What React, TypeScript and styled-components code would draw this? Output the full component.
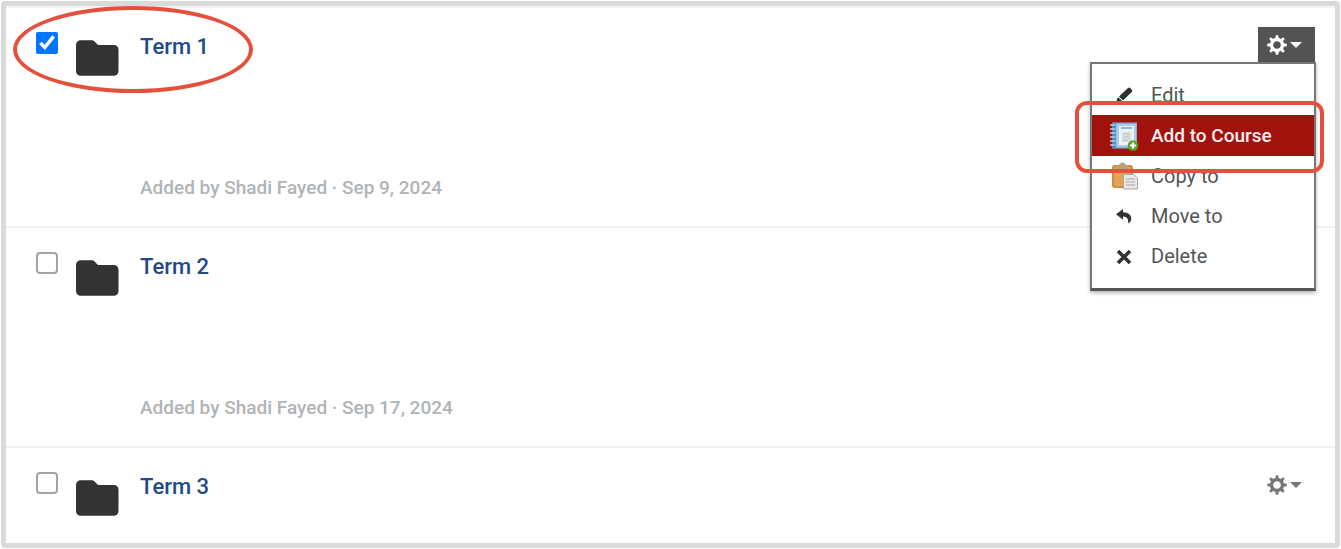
import React from "react";
import styled, { createGlobalStyle, css } from "styled-components";

const ACCENT = "#e5503d";

const GlobalStyle = createGlobalStyle`
  *, *::before, *::after { box-sizing: border-box; }
  body {
    margin: 0;
    background: #fff;
    font-family: Roboto, "Liberation Sans", sans-serif;
    font-size: 20px;
    color: #555;
  }
`;

const Page = styled.div`
  min-height: 100vh;
  padding: 1px;
  display: flex;
`;

const Frame = styled.main`
  flex: 1;
  border: 5px solid #d9dad9;
  border-radius: 4px;
  background: #fff;
`;

const List = styled.ul`
  list-style: none;
  margin: 0;
  padding: 0;
  border-top: 2px solid #f4f4f4;
`;

const Row = styled.li`
  position: relative;
  display: flex;
  align-items: flex-start;
  padding: 24px 20px 24px 30px;

  & + & {
    border-top: 2px solid #f1f1f1;
  }
`;

const Checkbox = styled.input`
  width: 22px;
  height: 22px;
  margin: 0 16px 0 0;

  &:not(:checked) {
    appearance: none;
    border: 2px solid #a3a3a3;
    border-radius: 4px;
    background: #fff;
  }
`;

const FolderIcon = styled.svg`
  width: 46px;
  height: 38px;
  margin: 7px 20px 0 0;
  fill: #333;
`;

const Details = styled.div`
  flex: 1;
  padding-top: 2px;
`;

const Title = styled.h2`
  margin: 0;
  font-size: 22px;
  line-height: 26px;
  font-weight: 500;
`;

const TitleLink = styled.a`
  color: #234a85;
  text-decoration: none;
`;

const Meta = styled.p`
  margin: 115px 0 1px;
  font-size: 19px;
  font-weight: 500;
  line-height: 26px;
  color: #b0b4b7;
`;

const Actions = styled.div`
  position: relative;
  margin-top: -5px;
`;

const GearButton = styled.button<{ $open?: boolean }>`
  display: flex;
  align-items: center;
  justify-content: center;
  gap: 3px;
  width: 57px;
  height: 35px;
  padding: 0 4px 0 0;
  border: 0;
  color: #777;
  background: transparent;
  ${(p) =>
    p.$open &&
    css`
      color: #fff;
      background: #535353;
    `}
`;

const Menu = styled.ul`
  position: absolute;
  z-index: 1;
  top: 100%;
  right: -1px;
  width: 226px;
  margin: 0;
  padding: 11px 0 12px;
  list-style: none;
  background: #fff;
  border: 2px solid #777;
  border-bottom: 3px solid #555;
  box-shadow: 0 2px 4px rgba(0, 0, 0, 0.3);
`;

const MenuEntry = styled.li`
  position: relative;
`;

const MenuButton = styled.button<{ $active?: boolean }>`
  display: flex;
  align-items: center;
  width: 100%;
  height: 40px;
  padding: 0 16px;
  border: 0;
  font: inherit;
  color: #555;
  background: transparent;
  ${(p) =>
    p.$active &&
    css`
      height: 41px;
      font-size: 19px;
      font-weight: 500;
      color: #fbeeee;
      background: #a2120d;
    `}
`;

const MenuIcon = styled.span`
  display: flex;
  justify-content: center;
  width: 32px;
  margin-right: 11px;
`;

const Highlight = styled.div`
  position: absolute;
  inset: -14px -10px -17px -17px;
  z-index: 2;
  border: 4px solid ${ACCENT};
  border-radius: 12px;
  pointer-events: none;
`;

const Ellipse = styled.div`
  position: absolute;
  top: -2px;
  left: 7px;
  width: 240px;
  height: 87px;
  border: 4px solid ${ACCENT};
  border-radius: 50%;
  pointer-events: none;
`;

const Folder = () => (
  <FolderIcon viewBox="0 0 46 38" aria-hidden="true">
    <path d="M7 1.200h10.500c1.500 0 2.400.5 3.300 1.500L24 6h15.500c3 0 5 1.800 5 4.800V32c0 3-2 4.800-5 4.800H7c-3 0-5-1.800-5-4.800V6c0-3 2-4.800 5-4.800z" />
  </FolderIcon>
);

const Gear = () => (
  <>
    <svg width="20" height="20" viewBox="-10 -10 20 20" aria-hidden="true">
      <circle r="5.500" fill="none" stroke="currentColor" strokeWidth="3.400" />
      {[0, 45, 90, 135, 180, 225, 270, 315].map((angle) => (
        <path
          key={angle}
          d="M-1.800-6L-1.200-9.800H1.200L1.800-6z"
          fill="currentColor"
          transform={`rotate(${angle})`}
        />
      ))}
    </svg>
    <svg width="12" height="8" viewBox="0 0 12 8" aria-hidden="true">
      <path d="M0 1h12L6 7z" fill="currentColor" />
    </svg>
  </>
);

const PencilIcon = () => (
  <svg width="20" height="20" viewBox="0 0 20 20" fill="#2f2f2f" aria-hidden="true">
    <path d="M14 3a1.500 1.500 0 0 1 2.100 0l1.700 1.800a1.500 1.500 0 0 1 0 2.100L9 15.500 5 11.600zM4.300 12.300l4 3.900-2.100 1.800-4.200.6 1-4.600z" />
  </svg>
);

const CourseIcon = () => (
  <svg width="30" height="30" viewBox="0 0 30 30" aria-hidden="true">
    <path d="M3 1.500h25v26H3z" fill="#7fb0d8" />
    <path d="M3 1.500h3.500v26H3z" fill="#4787bb" />
    <path d="M1 4h5M1 8h5M1 12h5M1 16h5M1 20h5M1 24h5" stroke="#b6d4ea" strokeWidth="1.500" />
    <path d="M7.500 3H27v23H7.500z" fill="#a9cfec" />
    <path d="M10 5h15v19H10z" fill="#eaf4fc" />
    <path d="M12 7h11" stroke="#88b6dc" strokeWidth="2" />
    <path d="M13 11h9v10h-9z" fill="#dcdedf" />
    <path d="M14 13h7M14 16h7M14 19h5" stroke="#bfc4c7" />
    <circle cx="24" cy="24.500" r="5.300" fill="#5aa51e" />
    <path d="M24 21.500v6M21 24.500h6" stroke="#fff" strokeWidth="2.200" />
  </svg>
);

const PasteIcon = () => (
  <svg width="30" height="30" viewBox="0 0 30 30" aria-hidden="true">
    <rect x="3" y="4" width="21" height="23" rx="3" fill="#d08a38" />
    <rect x="5" y="6" width="17" height="19" rx="1" fill="#e0a453" />
    <path d="M8 6c0-2 2-2 3-3 1-2 4-2 5 0 1 1 3 1 3 3v2H8z" fill="#b9a077" />
    <path d="M14.500 13.500h10l4 3.500v11h-14z" fill="#e9e9e9" stroke="#a8a8a8" />
    <path d="M17 18h9M17 21h9M17 24h9" stroke="#bdbdbd" strokeWidth="1.500" />
  </svg>
);

const MoveIcon = () => (
  <svg width="18" height="18" viewBox="0 0 18 18" aria-hidden="true">
    <path d="M1 7.200L8 2v3.300c5 .1 8.300 2.800 8.300 6.200 0 2.200-1.100 4-3.300 5 .9-3.600-.5-6.800-5-6.900v3.200z" fill="#333" />
  </svg>
);

const DeleteIcon = () => (
  <svg width="18" height="18" viewBox="0 0 18 18" aria-hidden="true">
    <path d="M3 4l12 12M15 4L3 16" stroke="#333" strokeWidth="3.600" />
  </svg>
);

const menuItems = [
  { label: "Edit", icon: <PencilIcon /> },
  { label: "Add to Course", icon: <CourseIcon />, active: true },
  { label: "Copy to", icon: <PasteIcon /> },
  { label: "Move to", icon: <MoveIcon /> },
  { label: "Delete", icon: <DeleteIcon /> },
];

const terms = [
  { title: "Term 1", date: "Sep 9, 2024", open: true },
  { title: "Term 2", date: "Sep 17, 2024" },
  { title: "Term 3", gear: true },
];

export default function App() {
  return (
    <Page>
      <GlobalStyle />
      <Frame>
        <List>
          {terms.map((term) => (
            <Row key={term.title}>
              <Checkbox
                type="checkbox"
                aria-label={`Select ${term.title}`}
                defaultChecked={term.open}
              />
              <Folder />
              <Details>
                <Title>
                  <TitleLink href="#">{term.title}</TitleLink>
                </Title>
                {term.date && <Meta>Added by Shadi Fayed · {term.date}</Meta>}
              </Details>
              {(term.open || term.gear) && (
                <Actions>
                  <GearButton
                    type="button"
                    $open={term.open}
                    aria-label={`Options for ${term.title}`}
                    aria-expanded={!!term.open}
                  >
                    <Gear />
                  </GearButton>
                  {term.open && (
                    <Menu>
                      {menuItems.map((item) => (
                        <MenuEntry key={item.label}>
                          <MenuButton type="button" $active={item.active}>
                            <MenuIcon>{item.icon}</MenuIcon>
                            {item.label}
                          </MenuButton>
                          {item.active && <Highlight />}
                        </MenuEntry>
                      ))}
                    </Menu>
                  )}
                </Actions>
              )}
              {term.open && <Ellipse />}
            </Row>
          ))}
        </List>
      </Frame>
    </Page>
  );
}
